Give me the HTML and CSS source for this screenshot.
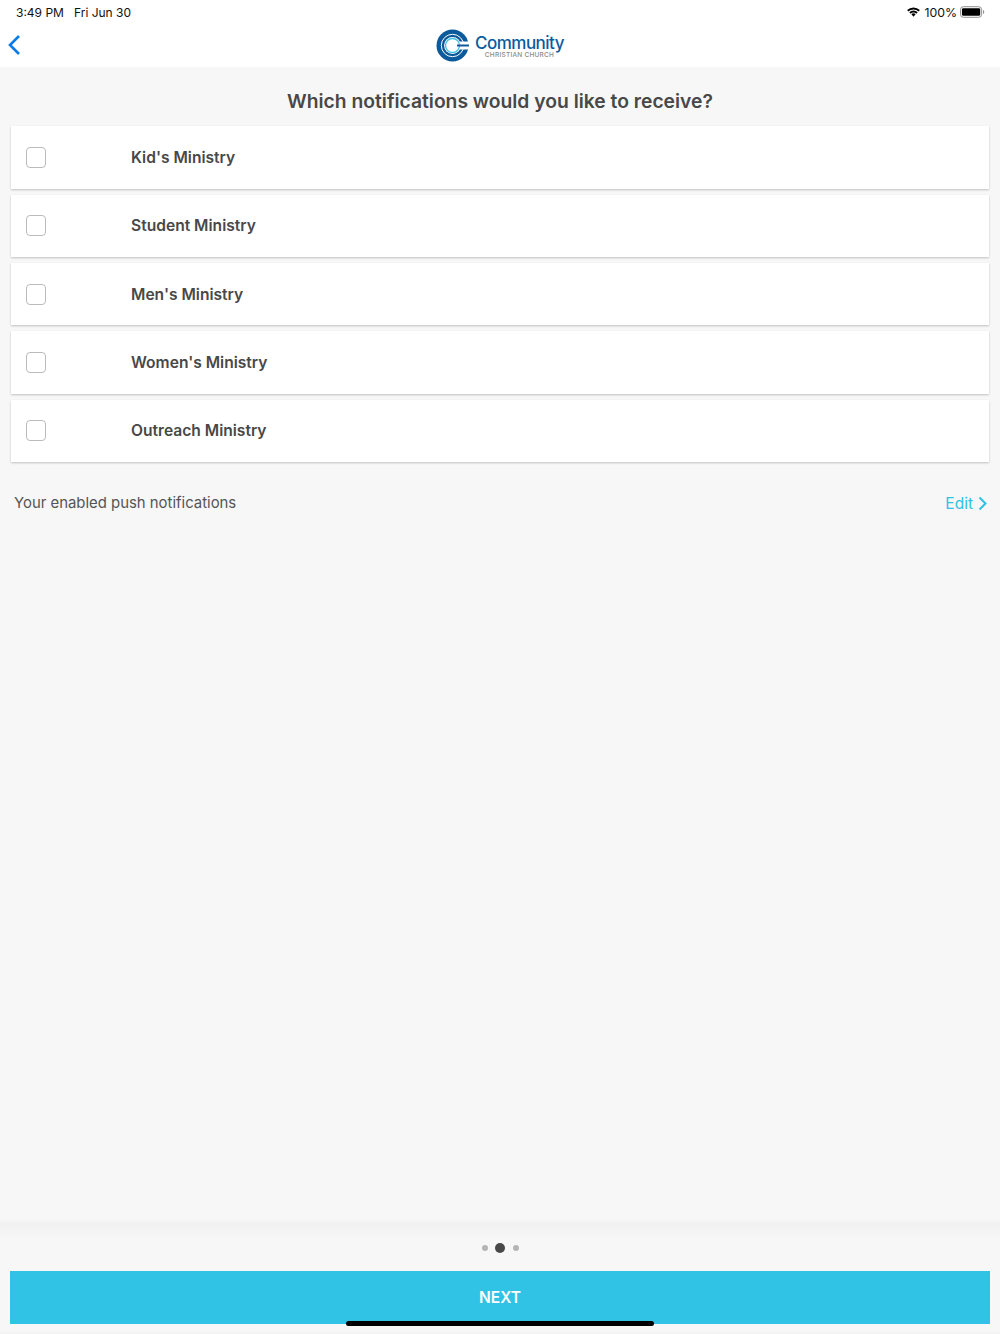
FILE: index.html
```html
<!DOCTYPE html>
<html lang="en">
<head>
  <meta charset="UTF-8">
  <meta name="viewport" content="width=device-width, initial-scale=1.0">
  <title>Notifications</title>
  <link rel="stylesheet" href="styles.css">
</head>
<body>
  <div class="page">
    <div class="status-bar">
      <div class="status-time"><span>3:49 PM</span><span>Fri Jun 30</span></div>
      <div class="status-right">
        <svg class="wifi" width="13" height="10" viewBox="0 0 14 11">
          <path d="M0 3.4A9.8 9.8 0 0 1 14 3.4L12.6 5A7.8 7.8 0 0 0 1.4 5Z" fill="#000"/>
          <path d="M2.4 5.8A6.5 6.5 0 0 1 11.6 5.8L10.2 7.3A4.5 4.5 0 0 0 3.8 7.3Z" fill="#000"/>
          <path d="M4.7 8A3.2 3.2 0 0 1 9.3 8L7 10.6Z" fill="#000"/>
        </svg>
        <span class="status-pct">100%</span>
        <svg class="battery" width="25" height="12" viewBox="0 0 26 12">
          <rect x="0.5" y="0.5" width="22" height="11" rx="3" fill="none" stroke="#8a8a8a"/>
          <rect x="2" y="2" width="19" height="8" rx="1.5" fill="#000"/>
          <path d="M24 4v4a2 2 0 0 0 1.2-2 2 2 0 0 0-1.2-2Z" fill="#8a8a8a"/>
        </svg>
      </div>
    </div>

    <header class="nav">
      <svg class="back" width="14" height="22" viewBox="0 0 14 22">
        <path d="M12 2L3 11l9 9" fill="none" stroke="#0a7ae8" stroke-width="2.6"/>
      </svg>
      <div class="logo">
        <svg width="33" height="33" viewBox="0 0 33 33">
          <circle cx="16.5" cy="16.5" r="16" fill="#0b5a9c"/>
          <circle cx="16.5" cy="16.5" r="11.2" fill="none" stroke="#fff" stroke-width="1"/>
          <circle cx="16.5" cy="16.5" r="8.4" fill="#fff"/>
          <circle cx="16.5" cy="16.5" r="7" fill="none" stroke="#45c3e6" stroke-width="1.4"/>
          <path d="M24 12.5h9v8h-9z" fill="#fff"/>
          <path d="M21 16.5h12" stroke="#0b5a9c" stroke-width="2"/>
        </svg>
        <div class="logo-text">
          <div class="logo-name">Community</div>
          <div class="logo-sub">CHRISTIAN CHURCH</div>
        </div>
      </div>
    </header>

    <main class="content">
      <h1 class="title">Which notifications would you like to receive?</h1>
      <div class="list">
        <div class="card"><span class="check"></span><span class="card-label">Kid's Ministry</span></div>
        <div class="card"><span class="check"></span><span class="card-label">Student Ministry</span></div>
        <div class="card"><span class="check"></span><span class="card-label">Men's Ministry</span></div>
        <div class="card"><span class="check"></span><span class="card-label">Women's Ministry</span></div>
        <div class="card"><span class="check"></span><span class="card-label">Outreach Ministry</span></div>
      </div>
      <div class="push-row">
        <span>Your enabled push notifications</span>
        <a class="edit">Edit
          <svg width="9" height="15" viewBox="0 0 9 15">
            <path d="M1.5 1.5l6 6-6 6" fill="none" stroke="#2fc1e4" stroke-width="2"/>
          </svg>
        </a>
      </div>
    </main>

    <footer class="footer">
      <div class="dots">
        <span class="dot"></span>
        <span class="dot active"></span>
        <span class="dot"></span>
      </div>
      <div class="next">NEXT</div>
    </footer>
    <div class="home-bar"></div>
  </div>
</body>
</html>
```

FILE: styles.css
```css
* {
  box-sizing: border-box;
}

html, body {
  margin: 0;
  padding: 0;
}

body {
  font-family: Inter, "Liberation Sans", sans-serif;
  color: #484848;
  background-color: #f7f7f7;
}

.page {
  position: relative;
  width: 1000px;
  height: 1334px;
  display: flex;
  flex-direction: column;
  overflow: hidden;
}

.status-bar {
  height: 24px;
  background-color: #fff;
  padding: 0 15px 0 16px;
  display: flex;
  justify-content: space-between;
  align-items: center;
  font-size: 12px;
  color: #111;
}

.status-time {
  display: flex;
  gap: 10px;
}

.status-right {
  display: flex;
  align-items: center;
}

.status-pct {
  margin: 0 3px 0 4px;
  font-size: 12.3px;
}

.nav {
  position: relative;
  height: 43px;
  background-color: #fff;
  display: flex;
  justify-content: center;
  align-items: center;
}

.back {
  position: absolute;
  left: 7px;
  top: 10px;
}

.logo {
  display: flex;
  align-items: center;
  gap: 6px;
}

.logo-name {
  font-size: 17px;
  font-weight: 500;
  letter-spacing: -0.5px;
  line-height: 15px;
  margin-top: 3px;
  color: #0b5a9c;
}

.logo-sub {
  font-size: 6.5px;
  font-weight: 500;
  line-height: 8px;
  letter-spacing: 0.25px;
  text-align: center;
  color: #8b8b80;
}

.content {
  flex: 1;
  padding: 0 11px;
}

.title {
  margin: 0;
  height: 59.4px;
  font-size: 19.3px;
  font-weight: 600;
  line-height: 68px;
  text-align: center;
}

.list {
  display: flex;
  flex-direction: column;
  gap: 6px;
}

.card {
  height: 62.3px;
  background-color: #fff;
  box-shadow: 0 1px 2px rgba(0, 0, 0, 0.22);
  display: flex;
  align-items: center;
  padding-left: 15px;
}

.check {
  width: 20px;
  height: 21px;
  border: 1px solid #bbb;
  border-radius: 4px;
  background-color: #fff;
}

.card-label {
  margin-left: 85px;
  font-size: 15.6px;
  font-weight: 600;
}

.push-row {
  margin-top: 32px;
  padding: 0 2px 0 3px;
  display: flex;
  justify-content: space-between;
  align-items: center;
  font-size: 14.9px;
  color: #555;
}

.edit {
  display: flex;
  align-items: center;
  gap: 5px;
  font-size: 15.5px;
  color: #2fc1e4;
}

.footer {
  height: 116px;
  padding: 0 10px;
  background: linear-gradient(to bottom, #f7f7f7 0, #f1f1f1 6px, #f7f7f7 22px, #f7f7f7 calc(100% - 4px), #f2f2f2 100%);
  display: flex;
  flex-direction: column;
  align-items: center;
}

.dots {
  height: 53px;
  padding-top: 7px;
  display: flex;
  align-items: center;
  gap: 7.5px;
}

.dot {
  width: 6px;
  height: 6px;
  border-radius: 50%;
  background-color: #b5b5b5;
}

.dot.active {
  width: 10px;
  height: 10px;
  background-color: #484848;
}

.next {
  width: 100%;
  height: 53px;
  background-color: #30c3e6;
  display: flex;
  justify-content: center;
  align-items: center;
  font-size: 15.5px;
  font-weight: 600;
  color: #fff;
}

.home-bar {
  position: absolute;
  left: 346px;
  top: 1321px;
  width: 308px;
  height: 5px;
  border-radius: 3px;
  background-color: #000;
}
```
